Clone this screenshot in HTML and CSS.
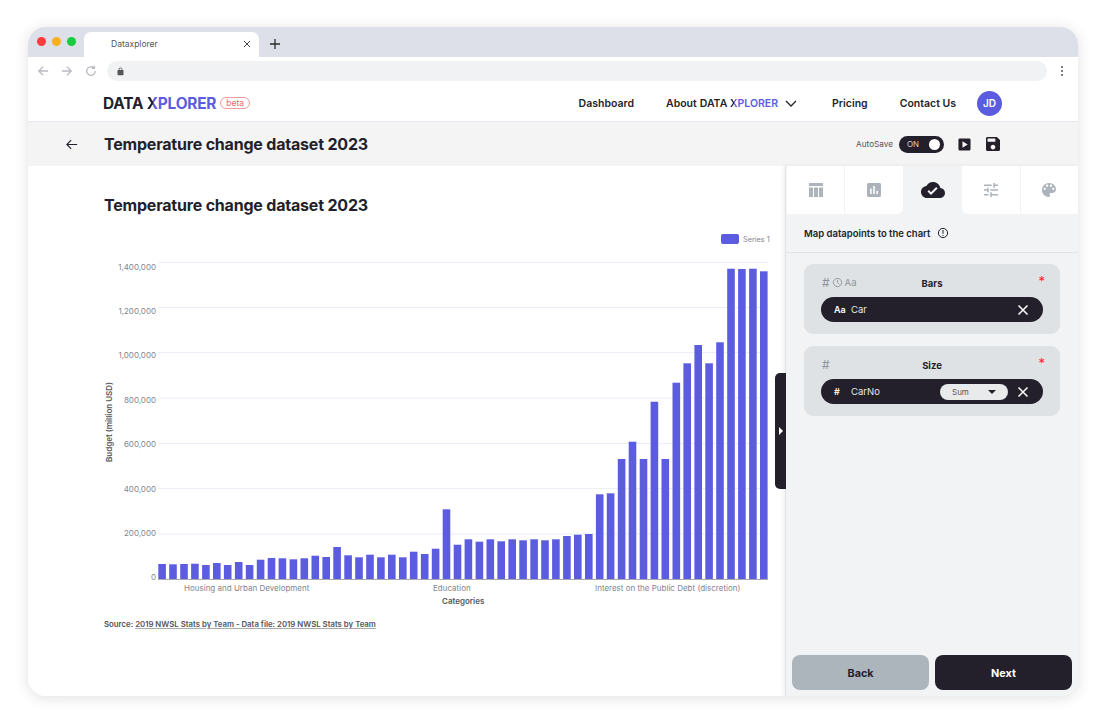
FILE: index.html
```html
<!DOCTYPE html>
<html lang="en">
<head>
  <meta charset="UTF-8">
  <meta name="viewport" content="width=device-width, initial-scale=1.0">
  <title>Dataxplorer</title>
  <link rel="stylesheet" href="styles.css">
</head>
<body>
  <div class="window">
    <!-- browser chrome -->
    <div class="tabstrip">
      <div class="dots">
        <span class="dot dot-red"></span>
        <span class="dot dot-yellow"></span>
        <span class="dot dot-green"></span>
      </div>
      <div class="browser-tab">
        <span>Dataxplorer</span>
        <svg class="tab-close" viewBox="0 0 8 8"><path d="M1 1l6 6M7 1l-6 6"/></svg>
      </div>
      <svg class="tab-new" viewBox="0 0 12 12"><path d="M6 1v10M1 6h10"/></svg>
    </div>
    <div class="urlbar">
      <svg class="nav-icon" viewBox="0 0 14 14"><path d="M13 7H2M7 2L2 7l5 5"/></svg>
      <svg class="nav-icon" viewBox="0 0 14 14"><path d="M1 7h11M7 2l5 5-5 5"/></svg>
      <svg class="nav-icon" viewBox="0 0 14 14"><path d="M12 7a5 5 0 1 1-1.5-3.5M11 1v3H8"/></svg>
      <div class="address">
        <svg class="lock" viewBox="0 0 24 24"><path d="M18 8h-1V6c0-2.76-2.24-5-5-5S7 3.24 7 6v2H6c-1.1 0-2 .9-2 2v10c0 1.1.9 2 2 2h12c1.1 0 2-.9 2-2V10c0-1.1-.9-2-2-2zM9 6c0-1.66 1.34-3 3-3s3 1.34 3 3v2H9V6z"/></svg>
      </div>
      <div class="kebab"><i></i><i></i><i></i></div>
    </div>

    <!-- site header -->
    <header class="site-header">
      <div class="brand">
        <span class="logo">DATA <span class="logo-x">X</span><span class="logo-blue">PLORER</span></span>
        <span class="beta">beta</span>
      </div>
      <nav class="main-nav">
        <a href="#">Dashboard</a>
        <a href="#" class="about">About <span class="about-brand">DATA <span class="logo-x">X</span><span class="logo-blue">PLORER</span></span>
          <svg class="chevron" viewBox="0 0 12 7"><path d="M1 1l5 5 5-5"/></svg>
        </a>
        <a href="#">Pricing</a>
        <a href="#">Contact Us</a>
      </nav>
      <div class="avatar">JD</div>
    </header>

    <!-- title row -->
    <div class="titlebar">
      <svg class="back-arrow" viewBox="0 0 14 12"><path d="M13 6H1.500M6 1L1 6l5 5"/></svg>
      <h1>Temperature change dataset 2023</h1>
      <div class="title-actions">
        <span class="autosave">AutoSave</span>
        <div class="toggle"><span>ON</span><i></i></div>
        <svg class="action-icon" viewBox="0 0 14 14"><path fill-rule="evenodd" d="M2 .5h10A1.500 1.500 0 0 1 13.500 2v10a1.500 1.500 0 0 1-1.500 1.500H2A1.500 1.500 0 0 1 .5 12V2A1.500 1.500 0 0 1 2 .5zM4.800 3.500v7L10.500 7z"/></svg>
        <svg class="action-icon action-save" viewBox="3 3 18 18"><path d="M17 3H5c-1.110 0-2 .9-2 2v14c0 1.100.89 2 2 2h14c1.100 0 2-.9 2-2V7l-4-4zm-5 16c-1.660 0-3-1.340-3-3s1.340-3 3-3 3 1.340 3 3-1.340 3-3 3zm3-10H5V5h10v4z"/></svg>
      </div>
    </div>

    <main class="workspace">
      <section class="chart-pane">
        <h2>Temperature change dataset 2023</h2>
        <svg class="chart" viewBox="100 228 680 384">
          <rect class="legend-swatch" x="721" y="234" width="18" height="10" rx="2"/>
          <text class="legend-text" x="743" y="242">Series 1</text>

          <g class="grid">
            <line x1="158" x2="768" y1="262.500" y2="262.500"/>
            <line x1="158" x2="768" y1="307.500" y2="307.500"/>
            <line x1="158" x2="768" y1="352.500" y2="352.500"/>
            <line x1="158" x2="768" y1="398" y2="398"/>
            <line x1="158" x2="768" y1="443.500" y2="443.500"/>
            <line x1="158" x2="768" y1="488.500" y2="488.500"/>
            <line x1="158" x2="768" y1="534" y2="534"/>
          </g>

          <g class="y-labels">
            <text x="156" y="270">1,400,000</text>
            <text x="156" y="314">1,200,000</text>
            <text x="156" y="358">1,000,000</text>
            <text x="156" y="403">800,000</text>
            <text x="156" y="447">600,000</text>
            <text x="156" y="492">400,000</text>
            <text x="156" y="536">200,000</text>
            <text x="156" y="580">0</text>
          </g>
          <text class="axis-title" transform="translate(112 462) rotate(-90)">Budget (million USD)</text>

          <g class="bars">
            <rect x="158.300" y="564" width="7.600" height="15"/>
            <rect x="169.200" y="564.300" width="7.600" height="14.700"/>
            <rect x="180.200" y="564" width="7.600" height="15"/>
            <rect x="191.100" y="563.700" width="7.600" height="15.300"/>
            <rect x="202.100" y="565" width="7.600" height="14"/>
            <rect x="213" y="563" width="7.600" height="16"/>
            <rect x="223.900" y="565" width="7.600" height="14"/>
            <rect x="234.900" y="562" width="7.600" height="17"/>
            <rect x="245.800" y="565" width="7.600" height="14"/>
            <rect x="256.800" y="559.700" width="7.600" height="19.300"/>
            <rect x="267.700" y="558" width="7.600" height="21"/>
            <rect x="278.600" y="558.300" width="7.600" height="20.700"/>
            <rect x="289.600" y="559.300" width="7.600" height="19.700"/>
            <rect x="300.500" y="558.300" width="7.600" height="20.700"/>
            <rect x="311.500" y="555.700" width="7.600" height="23.300"/>
            <rect x="322.400" y="557" width="7.600" height="22"/>
            <rect x="333.300" y="547" width="7.600" height="32"/>
            <rect x="344.300" y="555.300" width="7.600" height="23.700"/>
            <rect x="355.200" y="557.300" width="7.600" height="21.700"/>
            <rect x="366.200" y="554.700" width="7.600" height="24.300"/>
            <rect x="377.100" y="557.300" width="7.600" height="21.700"/>
            <rect x="388" y="554.700" width="7.600" height="24.300"/>
            <rect x="399" y="557.300" width="7.600" height="21.700"/>
            <rect x="409.900" y="551.700" width="7.600" height="27.300"/>
            <rect x="420.900" y="554" width="7.600" height="25"/>
            <rect x="431.800" y="548.700" width="7.600" height="30.300"/>
            <rect x="442.700" y="509.300" width="7.600" height="69.700"/>
            <rect x="453.700" y="544.700" width="7.600" height="34.300"/>
            <rect x="464.600" y="539.300" width="7.600" height="39.700"/>
            <rect x="475.600" y="541.700" width="7.600" height="37.300"/>
            <rect x="486.500" y="539.300" width="7.600" height="39.700"/>
            <rect x="497.400" y="541.300" width="7.600" height="37.700"/>
            <rect x="508.400" y="539.300" width="7.600" height="39.700"/>
            <rect x="519.300" y="540.300" width="7.600" height="38.700"/>
            <rect x="530.300" y="539.300" width="7.600" height="39.700"/>
            <rect x="541.200" y="540.300" width="7.600" height="38.700"/>
            <rect x="552.100" y="539.300" width="7.600" height="39.700"/>
            <rect x="563.100" y="536" width="7.600" height="43"/>
            <rect x="574" y="534.700" width="7.600" height="44.300"/>
            <rect x="585" y="534" width="7.600" height="45"/>
            <rect x="595.900" y="494.300" width="7.600" height="84.700"/>
            <rect x="606.800" y="493.300" width="7.600" height="85.700"/>
            <rect x="617.800" y="459" width="7.600" height="120"/>
            <rect x="628.700" y="441.700" width="7.600" height="137.300"/>
            <rect x="639.700" y="459" width="7.600" height="120"/>
            <rect x="650.600" y="401.700" width="7.600" height="177.300"/>
            <rect x="661.500" y="459" width="7.600" height="120"/>
            <rect x="672.500" y="382.700" width="7.600" height="196.300"/>
            <rect x="683.400" y="363.300" width="7.600" height="215.700"/>
            <rect x="694.400" y="345" width="7.600" height="234"/>
            <rect x="705.300" y="363.300" width="7.600" height="215.700"/>
            <rect x="716.200" y="342.300" width="7.600" height="236.700"/>
            <rect x="727.200" y="268.700" width="7.600" height="310.300"/>
            <rect x="738.100" y="269" width="7.600" height="310"/>
            <rect x="749.100" y="268.700" width="7.600" height="310.300"/>
            <rect x="760" y="271.300" width="7.600" height="307.700"/>
          </g>
          <line class="baseline" x1="158" x2="768" y1="579.500" y2="579.500"/>

          <g class="x-labels">
            <text x="184" y="591">Housing and Urban Development</text>
            <text x="433" y="591">Education</text>
            <text x="595" y="591">Interest on the Public Debt (discretion)</text>
          </g>
          <text class="axis-title" x="442" y="604">Categories</text>
        </svg>
        <p class="source">Source: <a href="#">2019 NWSL Stats by Team - Data file: 2019 NWSL Stats by Team</a></p>
      </section>

      <aside class="side-panel">
        <div class="collapse-handle"><i></i></div>
        <div class="step-tabs">
          <div class="step-tab">
            <svg viewBox="0 0 14 14"><path d="M0 0h14v3H0zM0 4.500h4V14H0zM5 4.500h4V14H5zM10 4.500h4V14h-4z"/></svg>
          </div>
          <div class="step-tab before-active">
            <svg viewBox="3 3 18 18"><path d="M19 3H5c-1.100 0-2 .9-2 2v14c0 1.100.9 2 2 2h14c1.100 0 2-.9 2-2V5c0-1.100-.9-2-2-2zM9 17H7v-7h2v7zm4 0h-2V7h2v10zm4 0h-2v-4h2v4z"/></svg>
          </div>
          <div class="step-tab active">
            <svg class="cloud" viewBox="0 4 24 16"><path d="M19.350 10.040C18.670 6.590 15.640 4 12 4 9.110 4 6.600 5.640 5.350 8.040 2.340 8.360 0 10.910 0 14c0 3.310 2.690 6 6 6h13c2.760 0 5-2.240 5-5 0-2.640-2.050-4.780-4.650-4.960zM10 17l-3.500-3.500 1.410-1.410L10 14.170 15.180 9l1.410 1.410L10 17z"/></svg>
          </div>
          <div class="step-tab after-active">
            <svg viewBox="3 3 18 18"><path d="M3 17v2h6v-2H3zM3 5v2h10V5H3zm10 16v-2h8v-2h-8v-2h-2v6h2zM7 9v2H3v2h4v2h2V9H7zm14 4v-2H11v2h10zm-6-4h2V7h4V5h-4V3h-2v6z"/></svg>
          </div>
          <div class="step-tab">
            <svg viewBox="3 3 18 18"><path d="M12 3c-4.970 0-9 4.030-9 9s4.030 9 9 9c.83 0 1.500-.67 1.500-1.500 0-.39-.15-.74-.39-1.010-.23-.26-.38-.61-.38-.99 0-.83.67-1.500 1.500-1.500H16c2.760 0 5-2.240 5-5 0-4.420-4.030-8-9-8zm-5.500 9c-.83 0-1.500-.67-1.500-1.500S5.670 9 6.500 9 8 9.670 8 10.500 7.330 12 6.500 12zm3-4C8.670 8 8 7.330 8 6.500S8.670 5 9.500 5s1.500.67 1.500 1.500S10.330 8 9.500 8zm5 0c-.83 0-1.500-.67-1.500-1.500S13.670 5 14.500 5s1.500.67 1.500 1.500S15.330 8 14.500 8zm3 4c-.83 0-1.500-.67-1.500-1.500S16.670 9 17.500 9s1.500.67 1.500 1.500-.67 1.500-1.500 1.500z"/></svg>
          </div>
        </div>

        <div class="panel-heading">
          <span>Map datapoints to the chart</span>
          <svg class="info" viewBox="0 0 12 12"><circle cx="6" cy="6" r="4.600"/><path d="M6 3v3.800M6 8v1"/></svg>
        </div>

        <div class="mapping-list">
          <div class="mapping-card">
            <div class="mapping-head">
              <div class="type-icons">
                <span>#</span>
                <svg class="clock" viewBox="0 0 12 12"><circle cx="6" cy="6" r="4.500"/><path d="M6 3v3l2 2"/></svg>
                <span class="type-aa">Aa</span>
              </div>
              <span class="mapping-name">Bars</span>
              <span class="required">*</span>
            </div>
            <div class="field-pill">
              <span class="field-type">Aa</span>
              <span class="field-name">Car</span>
              <svg class="field-x" viewBox="0 0 12 12"><path d="M1.500 1.500l9 9M10.500 1.500l-9 9"/></svg>
            </div>
          </div>

          <div class="mapping-card">
            <div class="mapping-head">
              <div class="type-icons"><span>#</span></div>
              <span class="mapping-name">Size</span>
              <span class="required">*</span>
            </div>
            <div class="field-pill">
              <span class="field-type">#</span>
              <span class="field-name">CarNo</span>
              <div class="agg-select"><span>Sum</span><i></i></div>
              <svg class="field-x" viewBox="0 0 12 12"><path d="M1.500 1.500l9 9M10.500 1.500l-9 9"/></svg>
            </div>
          </div>
        </div>

        <div class="panel-buttons">
          <button class="btn btn-back">Back</button>
          <button class="btn btn-next">Next</button>
        </div>
      </aside>
    </main>
  </div>
</body>
</html>
```

FILE: styles.css
```css
* {
  box-sizing: border-box;
}

html, body {
  height: 100%;
}

body {
  margin: 0;
  padding: 27px 28px 31px;
  background-color: #fff;
  color: #231f2b;
  font-family: "Inter", "Liberation Sans", sans-serif;
  overflow: hidden;
}

a {
  color: inherit;
  text-decoration: none;
}

.window {
  display: flex;
  flex-direction: column;
  height: 669px;
  border-radius: 18px;
  overflow: hidden;
  background-color: #fff;
  box-shadow: 0 2px 14px rgba(60, 60, 70, 0.16);
}

/* Browser chrome */
.tabstrip {
  display: flex;
  align-items: flex-end;
  flex: 0 0 30px;
  background-color: #dde0e8;
}

.dots {
  display: flex;
  gap: 6px;
  align-self: center;
  width: 56px;
  padding-left: 9px;
  margin-top: -2px;
}

.dot {
  width: 9px;
  height: 9px;
  border-radius: 50%;
}

.dot-red { background-color: #ff3b40; }
.dot-yellow { background-color: #fbb11e; }
.dot-green { background-color: #17cc3f; }

.browser-tab {
  display: flex;
  align-items: center;
  justify-content: space-between;
  width: 175px;
  height: 25px;
  padding: 0 8px 2px 27px;
  background-color: #fff;
  border-radius: 7px 7px 0 0;
  font-size: 8.500px;
  color: #555;
}

.tab-close {
  width: 8px;
  height: 8px;
  fill: none;
  stroke: #444;
  stroke-width: 1;
}

.tab-new {
  width: 12px;
  height: 12px;
  margin: 0 0 7px 10px;
  fill: none;
  stroke: #2a2a2a;
  stroke-width: 1.300;
}

.urlbar {
  display: flex;
  align-items: center;
  flex: 0 0 25px;
  padding: 3px 13px 0 9px;
  gap: 12px;
}

.nav-icon {
  width: 12px;
  height: 12px;
  fill: none;
  stroke: #b9bbbf;
  stroke-width: 1.500;
}

.address {
  display: flex;
  align-items: center;
  flex: 1;
  height: 20px;
  margin-left: -2px;
  padding-left: 9px;
  background-color: #f1f2f3;
  border-radius: 10px;
}

.lock {
  width: 9px;
  height: 9px;
  fill: #555;
}

.kebab {
  display: flex;
  flex-direction: column;
  gap: 2px;
  width: 6px;
  align-items: center;
}

.kebab i {
  width: 2px;
  height: 2px;
  border-radius: 50%;
  background-color: #555;
}

/* Site header */
.site-header {
  display: flex;
  align-items: center;
  flex: 0 0 40px;
  padding: 3px 76px 0 75px;
  border-bottom: 1px solid #e6e6f0;
}

.brand {
  display: flex;
  align-items: center;
  gap: 4px;
  margin-right: auto;
}

.logo {
  font-size: 15.400px;
  font-weight: 700;
  letter-spacing: -0.2px;
}

.logo-x {
  background: linear-gradient(90deg, #231f2b 55%, #5c5ce0 55%);
  -webkit-background-clip: text;
  background-clip: text;
  color: transparent;
}

.logo-blue {
  color: #5c5ce0;
}

.beta {
  height: 12px;
  padding: 0 5px;
  border: 1px solid #f09a9a;
  border-radius: 6px;
  color: #e9686c;
  font-size: 8.500px;
  line-height: 10px;
}

.main-nav {
  display: flex;
  align-items: center;
  gap: 32px;
  margin-right: 21px;
  font-size: 10.500px;
  font-weight: 600;
}

.about {
  display: flex;
  align-items: center;
  gap: 3px;
}

.about-brand {
  font-size: 10.500px;
}

.chevron {
  width: 12px;
  height: 7px;
  margin-left: 4px;
  margin-right: 3px;
  fill: none;
  stroke: #231f2b;
  stroke-width: 1.300;
}

.avatar {
  display: flex;
  align-items: center;
  justify-content: center;
  width: 25px;
  height: 25px;
  border-radius: 50%;
  background-color: #5c5ce0;
  color: #fff;
  font-size: 10px;
  font-weight: 600;
}

/* Title row */
.titlebar {
  display: flex;
  align-items: center;
  flex: 0 0 44px;
  padding: 0 78px 0 38px;
  background-color: #f4f4f5;
}

.back-arrow {
  width: 12px;
  height: 11px;
  margin-right: 26px;
  fill: none;
  stroke: #231f2b;
  stroke-width: 1.300;
}

h1, h2 {
  margin: 0;
  font-size: 16px;
  font-weight: 700;
  letter-spacing: -0.2px;
}

.title-actions {
  display: flex;
  align-items: center;
  margin-left: auto;
}

.autosave {
  margin-right: 6px;
  font-size: 8.200px;
  color: #555;
}

.toggle {
  display: flex;
  align-items: center;
  justify-content: space-between;
  width: 45px;
  height: 17px;
  padding: 0 4px 0 8px;
  margin-right: 14px;
  border-radius: 9px;
  background-color: #231f2b;
  color: #d5d5d8;
  font-size: 8px;
}

.toggle i {
  width: 11px;
  height: 11px;
  border-radius: 50%;
  background-color: #fff;
}

.action-icon {
  width: 13px;
  height: 13px;
  fill: #231f2b;
}

.action-save {
  width: 14px;
  height: 14px;
  margin-left: 15px;
}

/* Main area */
.workspace {
  display: flex;
  flex: 1;
  min-height: 0;
}

.chart-pane {
  flex: 1;
  padding: 29px 0 0 76px;
  background-color: #fff;
}

.chart-pane h2 {
  line-height: 20px;
}

.chart {
  display: block;
  width: 680px;
  height: 384px;
  margin-top: 13px;
  margin-left: -4px;
  font-family: "Inter", "Liberation Sans", sans-serif;
}

.legend-swatch,
.bars rect {
  fill: #5c5ce0;
}

.legend-text {
  fill: #85858c;
  font-size: 7.300px;
}

.y-labels text,
.x-labels text {
  fill: #85858c;
  font-size: 8px;
}

.y-labels text {
  text-anchor: end;
}

.grid line {
  stroke: #eceef7;
  stroke-width: 1.200;
}

.baseline {
  stroke: #a9a9b0;
  stroke-width: 1;
}

.axis-title {
  fill: #55555c;
  font-size: 8px;
  font-weight: 600;
}

.source {
  margin: 7px 0 0;
  font-size: 7.800px;
  font-weight: 600;
  color: #55555c;
}

.source a {
  text-decoration: underline;
  text-decoration-color: #aaa;
}

/* Side panel */
.side-panel {
  position: relative;
  display: flex;
  flex-direction: column;
  flex: 0 0 293px;
  background-color: #f2f3f5;
  border-left: 1px solid #e4e4e6;
  box-shadow: -2px 0 4px rgba(60, 60, 70, 0.08);
}

.collapse-handle {
  position: absolute;
  left: -11px;
  top: 207px;
  display: flex;
  align-items: center;
  justify-content: center;
  width: 11px;
  height: 116px;
  border-radius: 5px 0 0 5px;
  background-color: #231f2b;
}

.collapse-handle i {
  border-left: 4px solid #fff;
  border-top: 4px solid transparent;
  border-bottom: 4px solid transparent;
}

.step-tabs {
  display: flex;
  flex: 0 0 48px;
}

.step-tab {
  display: flex;
  align-items: center;
  justify-content: center;
  flex: 1;
  background-color: #fff;
  border-left: 1px solid #f2f3f5;
}

.step-tab svg {
  width: 14px;
  height: 14px;
  fill: #adb3ba;
}

.step-tab.active {
  background-color: #f2f3f5;
}

.step-tab .cloud {
  width: 24px;
  height: 16px;
  fill: #231f2b;
}

.before-active {
  border-bottom-right-radius: 6px;
}

.after-active {
  border-bottom-left-radius: 6px;
}

.panel-heading {
  display: flex;
  align-items: center;
  flex: 0 0 39px;
  gap: 7px;
  padding-left: 18px;
  border-bottom: 1px solid #e2e3e6;
  font-size: 9.500px;
  font-weight: 600;
}

.info {
  width: 12px;
  height: 12px;
  fill: none;
  stroke: #231f2b;
  stroke-width: 1;
}

.mapping-list {
  display: flex;
  flex-direction: column;
  gap: 12px;
  padding: 11px 18px 0;
}

.mapping-card {
  height: 70px;
  padding: 9px 17px 0;
  border-radius: 9px;
  background-color: #dfe2e5;
}

.mapping-head {
  position: relative;
  display: flex;
  align-items: center;
  justify-content: center;
  height: 20px;
  margin-bottom: 4px;
}

.type-icons {
  position: absolute;
  left: 1px;
  top: 2px;
  display: flex;
  align-items: center;
  gap: 2px;
  color: #8f949b;
  font-size: 12px;
}

.type-aa {
  font-size: 9.500px;
}

.clock {
  width: 11px;
  height: 11px;
  fill: none;
  stroke: #8f949b;
  stroke-width: 1;
}

.mapping-name {
  font-size: 9.500px;
  font-weight: 700;
}

.required {
  position: absolute;
  right: -2px;
  top: 0;
  color: #ff1a2e;
  font-size: 13px;
  line-height: 16px;
}

.field-pill {
  display: flex;
  align-items: center;
  height: 25px;
  padding: 0 14px 0 13px;
  border-radius: 13px;
  background-color: #231f2b;
  color: #e6e6e8;
}

.field-type {
  width: 16px;
  font-size: 9px;
  font-weight: 600;
  color: #fff;
}

.field-name {
  margin-left: 1px;
  font-size: 9.500px;
}

.field-x {
  width: 12px;
  height: 12px;
  margin-left: auto;
  fill: none;
  stroke: #fff;
  stroke-width: 1.500;
}

.agg-select {
  display: flex;
  align-items: center;
  justify-content: space-between;
  width: 68px;
  height: 16px;
  margin-left: auto;
  padding: 0 12px 0 12px;
  border-radius: 8px;
  background-color: #e9eaec;
  color: #55555c;
  font-size: 8px;
}

.agg-select i {
  border-top: 4px solid #231f2b;
  border-left: 4px solid transparent;
  border-right: 4px solid transparent;
}

.agg-select + .field-x {
  margin-left: 9px;
}

.panel-buttons {
  display: flex;
  gap: 6px;
  margin-top: auto;
  padding: 0 6px 6px;
}

.btn {
  flex: 1;
  height: 35px;
  padding-top: 2px;
  border: none;
  border-radius: 8px;
  font-family: inherit;
  font-size: 10.800px;
  font-weight: 700;
}

.btn-back {
  background-color: #adb5bc;
  color: #231f2b;
}

.btn-next {
  background-color: #231f2b;
  color: #fff;
}
```
